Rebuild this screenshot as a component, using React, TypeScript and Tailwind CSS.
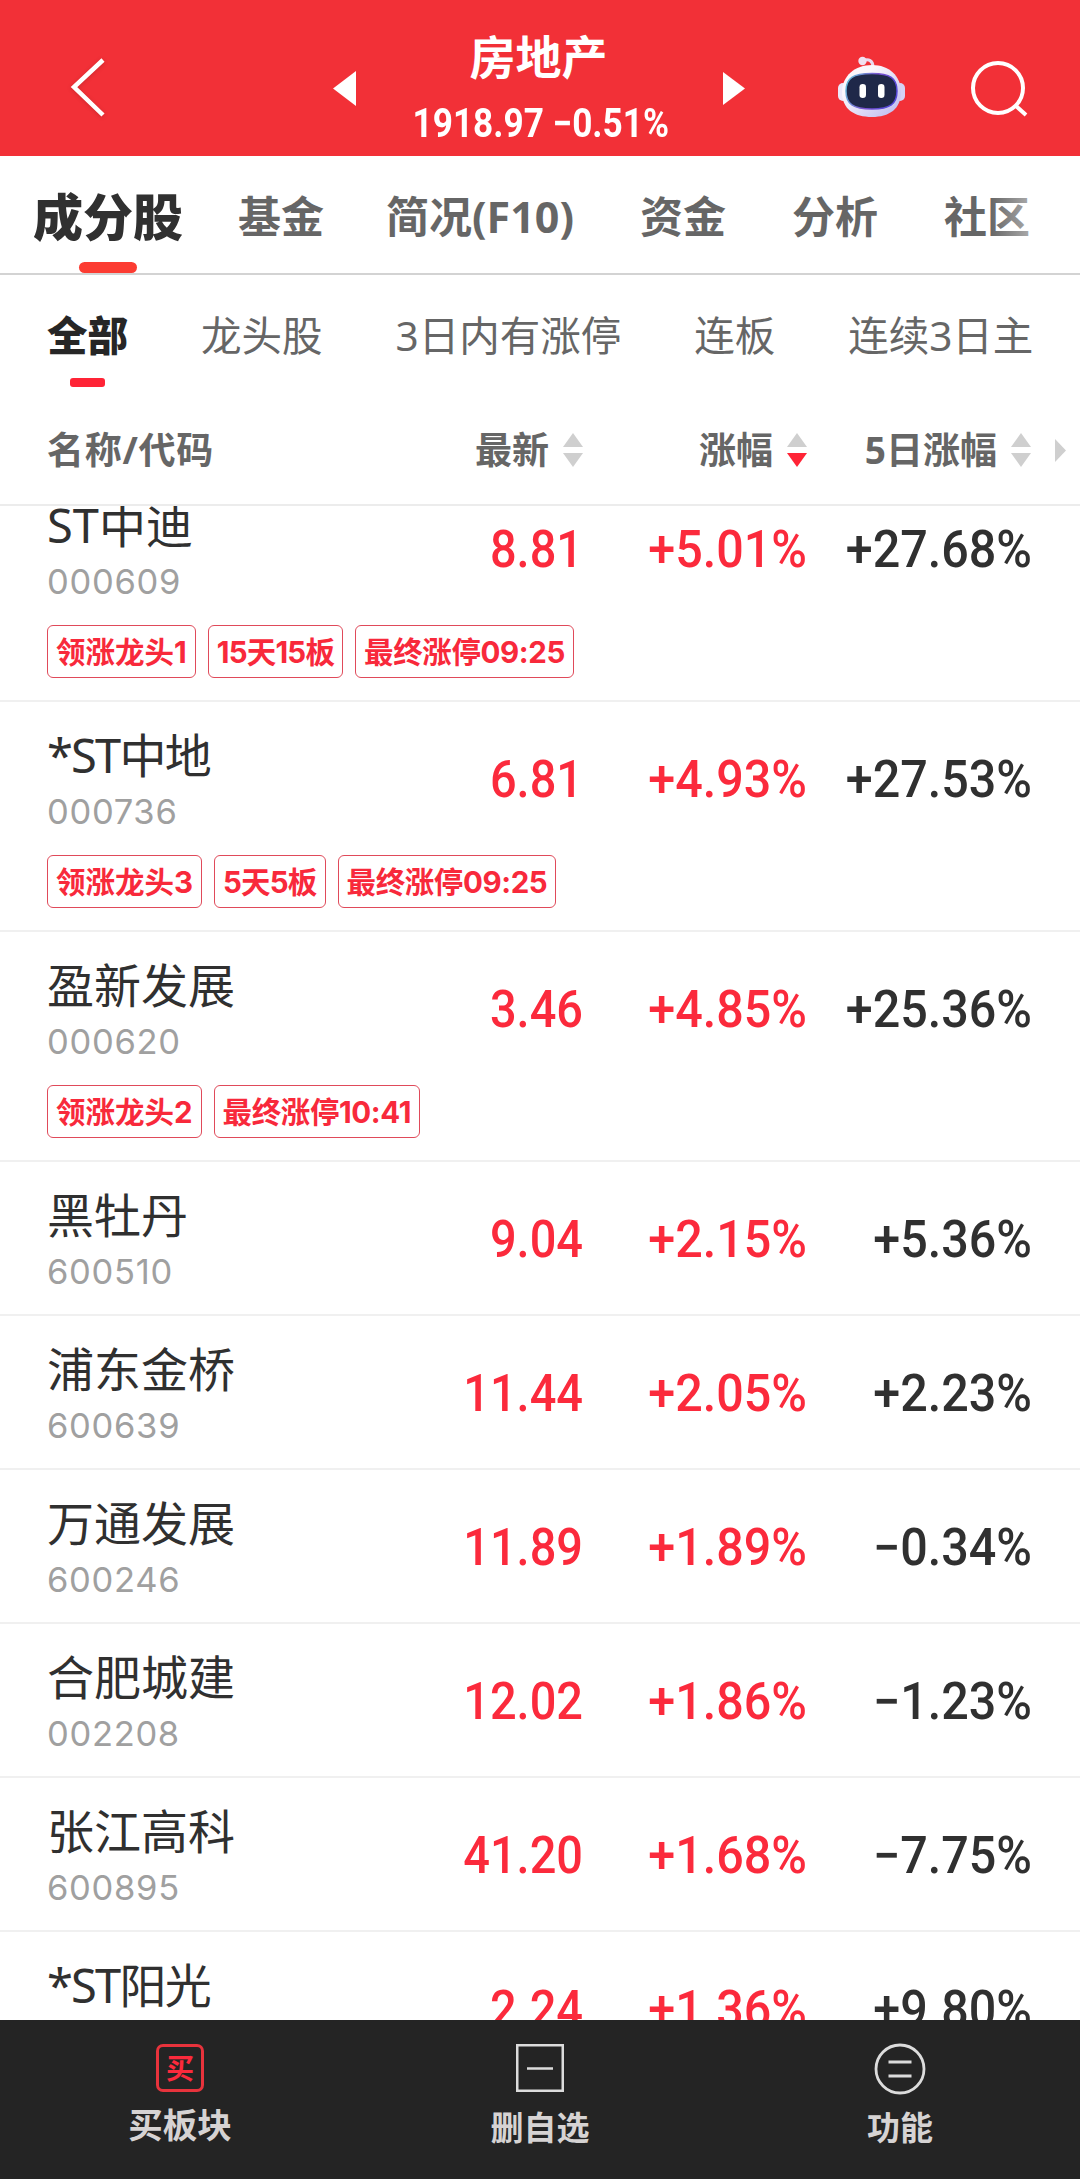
import React from "react";
import clsx from "clsx";

type Stock = {
  name: string;
  code: string;
  price: string;
  change: string;
  change5: string;
  tags?: string[];
};

const tabs = [
  { label: "基金", className: "ml-[55px]" },
  { label: "简况(F10)", className: "ml-[62px]" },
  { label: "资金", className: "ml-[66px]" },
  { label: "分析", className: "ml-[66px]" },
  { label: "社区", className: "ml-[66px]" },
];

const filters = ["龙头股", "3日内有涨停", "连板", "连续3日主"];

const stocks: Stock[] = [
  { name: "ST中迪", code: "000609", price: "8.81", change: "+5.01%", change5: "+27.68%", tags: ["领涨龙头1", "15天15板", "最终涨停09:25"] },
  { name: "*ST中地", code: "000736", price: "6.81", change: "+4.93%", change5: "+27.53%", tags: ["领涨龙头3", "5天5板", "最终涨停09:25"] },
  { name: "盈新发展", code: "000620", price: "3.46", change: "+4.85%", change5: "+25.36%", tags: ["领涨龙头2", "最终涨停10:41"] },
  { name: "黑牡丹", code: "600510", price: "9.04", change: "+2.15%", change5: "+5.36%" },
  { name: "浦东金桥", code: "600639", price: "11.44", change: "+2.05%", change5: "+2.23%" },
  { name: "万通发展", code: "600246", price: "11.89", change: "+1.89%", change5: "−0.34%" },
  { name: "合肥城建", code: "002208", price: "12.02", change: "+1.86%", change5: "−1.23%" },
  { name: "张江高科", code: "600895", price: "41.20", change: "+1.68%", change5: "−7.75%" },
  { name: "*ST阳光", code: "", price: "2.24", change: "+1.36%", change5: "+9.80%" },
];

function Robot() {
  return (
    <svg className="h-[64px] w-[70px]" viewBox="0 0 70 64" fill="none">
      <defs>
        <linearGradient id="shell" x1="0" y1="0" x2="1" y2="1">
          <stop offset="0.3" stopColor="#fbf7fc" />
          <stop offset="1" stopColor="#b9b6ee" />
        </linearGradient>
        <linearGradient id="rim" x1="0" y1="0" x2="1" y2="0.3">
          <stop offset="0" stopColor="#62c8d8" />
          <stop offset="0.6" stopColor="#7a4fd0" />
          <stop offset="1" stopColor="#5548d8" />
        </linearGradient>
      </defs>
      <path d="M25 5C32 2 36 5 36 11" stroke="#ead9ee" strokeWidth="3" />
      <circle cx="25.500" cy="5" r="4.200" fill="#f1e0f0" />
      <rect x="1" y="27" width="10" height="18" rx="5" fill="#ece8fa" />
      <rect x="58" y="27" width="10" height="18" rx="5" fill="#d5d2f5" />
      <path d="M35 9C52 9 64 20 64 36C64 53 52 61 35 61C17 61 5 53 5 36C5 20 18 9 35 9Z" fill="url(#shell)" />
      <path d="M35 17.500C53 17.500 60 22 60 35C60 48 53 53 35 53C16 53 9 48 9 35C9 22 16 17.500 35 17.500Z" fill="#1f2849" stroke="url(#rim)" strokeWidth="1.500" />
      <rect x="22.500" y="28" width="6.500" height="14" rx="3.200" fill="#fff" />
      <rect x="41" y="28" width="6.500" height="14" rx="3.200" fill="#fff" />
    </svg>
  );
}

function Header() {
  return (
    <header className="flex h-[156px] items-start bg-[#f23037] text-white">
      <svg className="mt-[56px] ml-[70px] h-[66px] w-[38px] drop-shadow-sm" viewBox="0 0 38 66" fill="none" stroke="currentColor" strokeWidth="4.500">
        <path d="M33 4L4 31L33 59" />
      </svg>
      <svg className="mt-[71px] ml-[225px] h-[35px] w-[23px]" viewBox="0 0 23 35" fill="currentColor">
        <path d="M23 0V35L0 17.500Z" />
      </svg>
      <div className="flex w-[367px] flex-col items-center">
        <h1 className="mt-8 -ml-0.5 text-[46px] leading-[48px] font-bold">房地产</h1>
        <p className="mt-[21px] ml-[3px] scale-x-[0.88] font-[Roboto] text-[40px] leading-[46px] font-bold whitespace-nowrap">
          1918.97 −0.51%
        </p>
      </div>
      <svg className="mt-[72px] h-[33px] w-[22px]" viewBox="0 0 22 33" fill="currentColor">
        <path d="M0 0L22 16.500L0 33Z" />
      </svg>
      <div className="mt-[56px] ml-[92px]">
        <Robot />
      </div>
      <svg className="mt-[58px] ml-[63px] h-[62px] w-[60px]" viewBox="0 0 60 62" fill="none" stroke="currentColor" strokeWidth="4">
        <circle cx="28" cy="30" r="25" />
        <path d="M46 48L56 57" />
      </svg>
    </header>
  );
}

function Tabs() {
  return (
    <nav className="relative flex h-[119px] border-b-2 border-[#d3d3d3] pl-[33px] text-[43px] leading-[122px] font-bold whitespace-nowrap text-[#666]">
      <div className="flex flex-col items-center">
        <span className="h-[106px] text-[50px] font-black text-[#303030]">成分股</span>
        <span className="h-3 w-[58px] rounded-full bg-[#fc3c32]" />
      </div>
      {tabs.map((tab) => (
        <span key={tab.label} className={tab.className}>
          {tab.label}
        </span>
      ))}
      <div className="absolute top-0 right-0 h-[110px] w-[90px] bg-linear-to-r from-white/0 to-white" />
    </nav>
  );
}

function Filters() {
  return (
    <div className="flex h-[124px] gap-[73px] pl-[47px] text-[40.5px] leading-[122px] whitespace-nowrap text-[#666]">
      <div className="flex w-[81px] flex-col items-center">
        <span className="h-[103px] font-black text-[#262626]">全部</span>
        <span className="h-[9px] w-[35px] rounded-[3px] bg-[#ff2436]" />
      </div>
      {filters.map((filter) => (
        <span key={filter}>{filter}</span>
      ))}
    </div>
  );
}

function SortHead({ label, desc }: { label: string; desc?: boolean }) {
  return (
    <div className="flex items-center justify-end gap-[14px]">
      <span>{label}</span>
      <svg className="h-[34px] w-5" viewBox="0 0 20 34" fill="#cfcfcf">
        <path d="M10 0L20 14H0Z" />
        <path d="M0 20H20L10 34Z" fill={desc ? "#ff2436" : "#cfcfcf"} />
      </svg>
    </div>
  );
}

function TableHead() {
  return (
    <div className="flex h-[107px] items-center border-b-2 border-[#ececec] pb-[3px] pl-[47px] text-[37px] font-bold text-[#666]">
      <div className="grid grid-cols-[393px_143px_224px_224px]">
        <span className="tracking-[0.7px]">名称/代码</span>
        <SortHead label="最新" />
        <SortHead label="涨幅" desc />
        <SortHead label="5日涨幅" />
      </div>
      <svg className="ml-6 h-[23px] w-[11px]" viewBox="0 0 11 23" fill="#cfcfcf">
        <path d="M0 0L11 11.500L0 23Z" />
      </svg>
    </div>
  );
}

function Num({ value, className }: { value: string; className?: string }) {
  return (
    <span className={clsx("mt-[48px] origin-right text-right font-[Roboto] text-[51px] leading-[60px] font-medium", className)}>
      {value}
    </span>
  );
}

function StockRow({ stock }: { stock: Stock }) {
  // "*ST" names are set a little tighter
  const starred = stock.name.startsWith("*");

  return (
    <li className={clsx("shrink-0 border-b-2 border-[#f0f0f0] pl-[47px]", stock.tags ? "h-[230px]" : "h-[154px]")}>
      <div className="grid h-[153px] grid-cols-[393px_143px_224px_225px]">
        <div className="flex flex-col pt-[26px]">
          <span className={clsx("text-[47px] leading-[54px] text-[#303030]", starred && "tracking-[-1.8px]")}>{stock.name}</span>
          <span className="mt-[9px] font-[Inter] text-[34.5px] leading-[42px] tracking-[0.7px] text-[#a0a0a0]">{stock.code}</span>
        </div>
        <Num value={stock.price} className="scale-x-[0.92] text-[#fb2a3c]" />
        <Num value={stock.change} className="scale-x-[0.95] text-[#fb2a3c]" />
        <Num value={stock.change5} className="scale-x-[0.95] text-[#303030]" />
      </div>
      {stock.tags && (
        <div className="flex gap-3">
          {stock.tags.map((tag) => (
            <span
              key={tag}
              className={clsx(
                "h-[53px] rounded-[6px] border border-[#e04a5a] px-2 font-[Inter,'Noto_Sans_CJK_SC',sans-serif] text-[29.5px] leading-[52px] font-bold text-[#f8293b]",
                tag.includes("天") && "tracking-[-0.8px]",
                tag.includes(":") && "tracking-[-0.4px]"
              )}
            >
              {tag}
            </span>
          ))}
        </div>
      )}
    </li>
  );
}

function BottomBar() {
  return (
    <footer className="grid h-[159px] grid-cols-3 bg-[#242424] text-[33px] leading-[40px] font-bold text-[#d6d3d3]">
      <div className="flex flex-col items-center pt-6">
        <span className="flex size-12 items-center justify-center rounded-[7px] border-3 border-[#e8333c] text-[28px] leading-none text-[#fb2a3c]">
          买
        </span>
        <span className="mt-[13px] text-[34.5px]">买板块</span>
      </div>
      <div className="flex flex-col items-center pt-6">
        <svg className="size-12" viewBox="0 0 48 48" fill="none" stroke="#dcdcdc" strokeWidth="2.500">
          <rect x="1.250" y="1.250" width="45.500" height="45.500" />
          <path d="M11 24.500H37" />
        </svg>
        <span className="mt-4">删自选</span>
      </div>
      <div className="flex flex-col items-center pt-[23px]">
        <svg className="size-[52px]" viewBox="0 0 52 52" fill="none" stroke="#dcdcdc" strokeWidth="2.800">
          <circle cx="26" cy="26" r="24" />
          <path d="M14.500 19H37.500M14.500 33H37.500" />
        </svg>
        <span className="mt-[13px]">功能</span>
      </div>
    </footer>
  );
}

export default function App() {
  return (
    <main lang="zh-CN" className="flex h-[2179px] w-[1080px] flex-col overflow-hidden bg-white font-['Noto_Sans','Noto_Sans_CJK_SC',sans-serif]">
      <Header />
      <Tabs />
      <Filters />
      <TableHead />
      <div className="min-h-0 flex-1 overflow-hidden">
        {/* the list is scrolled a little, so the first row starts above the edge */}
        <ul className="-mt-[34px] flex flex-col">
          {stocks.map((stock) => (
            <StockRow key={stock.name} stock={stock} />
          ))}
        </ul>
      </div>
      <BottomBar />
    </main>
  );
}
